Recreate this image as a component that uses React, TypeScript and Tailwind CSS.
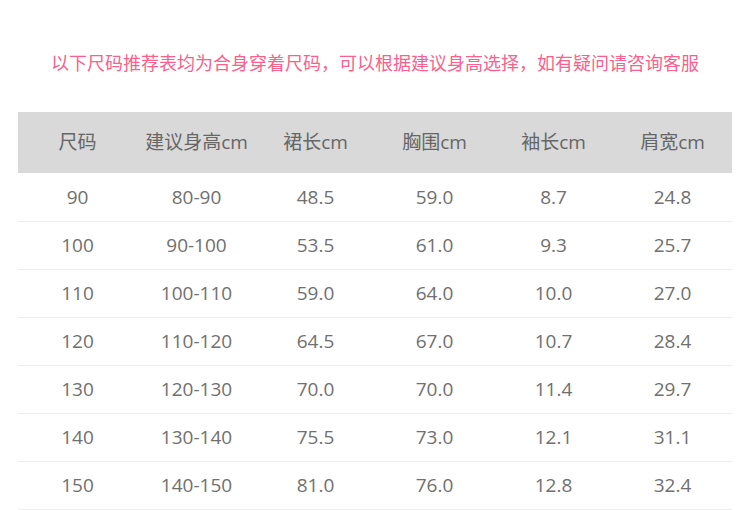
const headers = ["尺码", "建议身高cm", "裙长cm", "胸围cm", "袖长cm", "肩宽cm"];

const rows = [
	["90", "80-90", "48.5", "59.0", "8.7", "24.8"],
	["100", "90-100", "53.5", "61.0", "9.3", "25.7"],
	["110", "100-110", "59.0", "64.0", "10.0", "27.0"],
	["120", "110-120", "64.5", "67.0", "10.7", "28.4"],
	["130", "120-130", "70.0", "70.0", "11.4", "29.7"],
	["140", "130-140", "75.5", "73.0", "12.1", "31.1"],
	["150", "140-150", "81.0", "76.0", "12.8", "32.4"],
];

export default function App() {
	return (
		<div className="w-[750px] h-[510px] bg-white overflow-hidden font-['Open_Sans','Noto_Sans_CJK_SC',sans-serif]">
			<p className="pt-[50px] h-[112px] text-center text-[18px] leading-[26px] text-[#fb5f8c]">
				以下尺码推荐表均为合身穿着尺码，可以根据建议身高选择，如有疑问请咨询客服
			</p>
			<div className="ml-[18px] w-[714px]">
				<div className="grid grid-cols-6 h-[61px] mb-px items-center bg-[#d9d9d9] text-[19px] text-[#666]">
					{headers.map((h) => (
						<div key={h} className="text-center">
							{h}
						</div>
					))}
				</div>
				{rows.map((r) => (
					<div
						key={r[0]}
						className="grid grid-cols-6 h-[48px] items-center border-b border-[#ececec] text-[19px] text-[#707070]"
					>
						{r.map((c, i) => (
							<div key={i} className="text-center">
								{c}
							</div>
						))}
					</div>
				))}
			</div>
		</div>
	);
}
